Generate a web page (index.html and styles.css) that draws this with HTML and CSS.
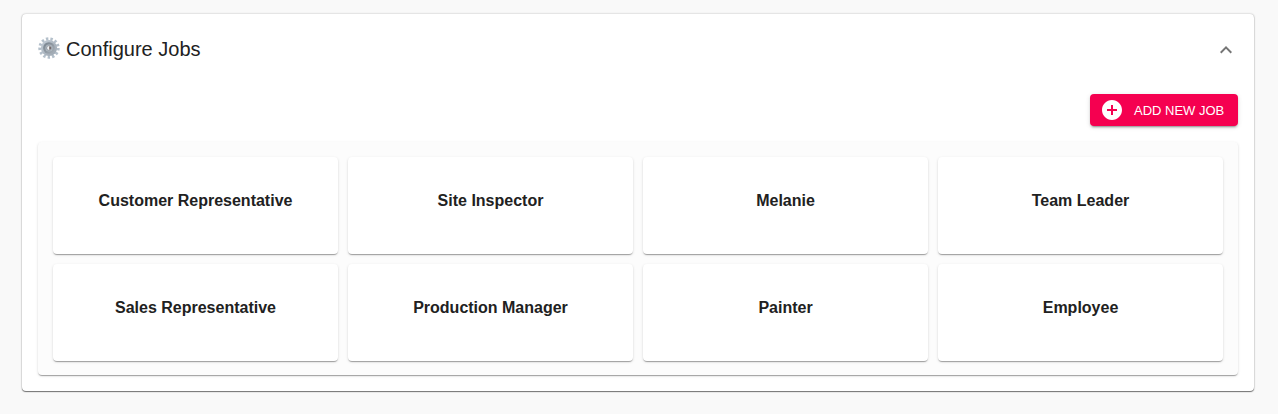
FILE: index.html
```html
<!DOCTYPE html>
<html lang="en">
<head>
<meta charset="utf-8">
<meta name="viewport" content="width=device-width, initial-scale=1">
<title>Configure Jobs</title>
<link rel="stylesheet" href="styles.css">
</head>
<body>
<main class="panel">
  <h1 class="panel-heading">
    <button class="panel-toggle" type="button" aria-expanded="true" aria-controls="jobs">
      <svg class="gear" viewBox="0 0 24 24" aria-hidden="true">
        <defs>
          <linearGradient id="metal" x1="0" y1="0" x2="1" y2="1">
            <stop offset="0" stop-color="#c3cdd7"/>
            <stop offset="1" stop-color="#9aa4ae"/>
          </linearGradient>
          <linearGradient id="dish" x1="0" y1="0" x2="1" y2="1">
            <stop offset="0" stop-color="#74808b"/>
            <stop offset="1" stop-color="#a9b1b9"/>
          </linearGradient>
        </defs>
        <circle cx="12" cy="12" r="10" fill="none" stroke="#b3bfca" stroke-width="3.4" stroke-dasharray="2.6 2.233"/>
        <circle cx="12" cy="12" r="8.8" fill="url(#metal)"/>
        <circle cx="12" cy="12" r="6.4" fill="url(#dish)"/>
        <circle cx="12" cy="12" r="3.9" fill="#b4bdc5"/>
        <circle cx="12" cy="12" r="2.6" fill="#f0f2f3" stroke="#7d8790" stroke-width=".8"/>
        <path d="M12.300 10a2 2 0 0 1 0 4z" fill="#6b5f5f"/>
      </svg>
      <span class="panel-title">Configure Jobs</span>
      <svg class="chevron" viewBox="0 0 24 24" aria-hidden="true"><path d="M12 8l-6 6 1.41 1.41L12 10.83l4.59 4.58L18 14z"/></svg>
    </button>
  </h1>
  <section class="panel-body" id="jobs">
    <button class="add-button" type="button">
      <svg class="add-icon" viewBox="0 0 24 24" aria-hidden="true"><path d="M12 2C6.48 2 2 6.48 2 12s4.48 10 10 10 10-4.480 10-10S17.520 2 12 2zm5 11h-4v4h-2v-4H7v-2h4V7h2v4h4v2z"/></svg>
      <span>ADD NEW JOB</span>
    </button>
    <ul class="job-grid">
      <li class="job-card">Customer Representative</li>
      <li class="job-card">Site Inspector</li>
      <li class="job-card">Melanie</li>
      <li class="job-card">Team Leader</li>
      <li class="job-card">Sales Representative</li>
      <li class="job-card">Production Manager</li>
      <li class="job-card">Painter</li>
      <li class="job-card">Employee</li>
    </ul>
  </section>
</main>
</body>
</html>
```
FILE: styles.css
```css
* {
  box-sizing: border-box;
}

body {
  margin: 0;
  padding: 14px 24px 23px 22px;
  background: #f9f9f9;
  color: #212121;
  font-family: "Liberation Sans", Arial, sans-serif;
}

button {
  border: 0;
  font-family: inherit;
  cursor: pointer;
}

.panel,
.job-grid,
.job-card {
  border-radius: 4px;
  box-shadow: 0 2px 1px -1px rgba(0, 0, 0, .2), 0 1px 1px 0 rgba(0, 0, 0, .14), 0 1px 3px 0 rgba(0, 0, 0, .12);
}

.panel {
  padding: 0 16px 16px;
  background: #fff;
  box-shadow: 0 1px 1px 0 rgba(0, 0, 0, .5), 0 0 2px 0 rgba(0, 0, 0, .3);
}

.panel-heading {
  margin: 0;
}

.panel-toggle {
  display: flex;
  align-items: center;
  width: 100%;
  height: 72px;
  padding: 0;
  background: none;
  color: inherit;
}

.gear {
  width: 22px;
  height: 22px;
  margin-right: 6px;
  margin-bottom: 4px;
}

.panel-title {
  padding-bottom: 2px;
  font-size: 20px;
  font-weight: 400;
  line-height: 32px;
}

.chevron {
  width: 24px;
  height: 24px;
  margin-left: auto;
  fill: #757575;
}

.panel-body {
  display: flex;
  flex-direction: column;
  padding-top: 8px;
}

.add-button {
  display: flex;
  align-items: center;
  align-self: flex-end;
  gap: 10px;
  min-width: 148px;
  height: 32px;
  padding: 0 10px;
  border-radius: 4px;
  background: #f50050;
  color: #fff;
  font-size: 13px;
  box-shadow: 0 3px 1px -2px rgba(0, 0, 0, .2), 0 2px 2px 0 rgba(0, 0, 0, .14), 0 1px 5px 0 rgba(0, 0, 0, .12);
}

.add-icon {
  width: 24px;
  height: 24px;
  fill: currentColor;
}

.job-grid {
  display: grid;
  grid-template-columns: repeat(4, 1fr);
  gap: 10px;
  margin: 16px 0 0;
  padding: 15px 15px 14px;
  background: #fcfcfc;
  list-style: none;
}

.job-card {
  padding: 32px 16px 41px;
  background: #fff;
  font-size: 16px;
  font-weight: 700;
  line-height: 24px;
  text-align: center;
}
```
